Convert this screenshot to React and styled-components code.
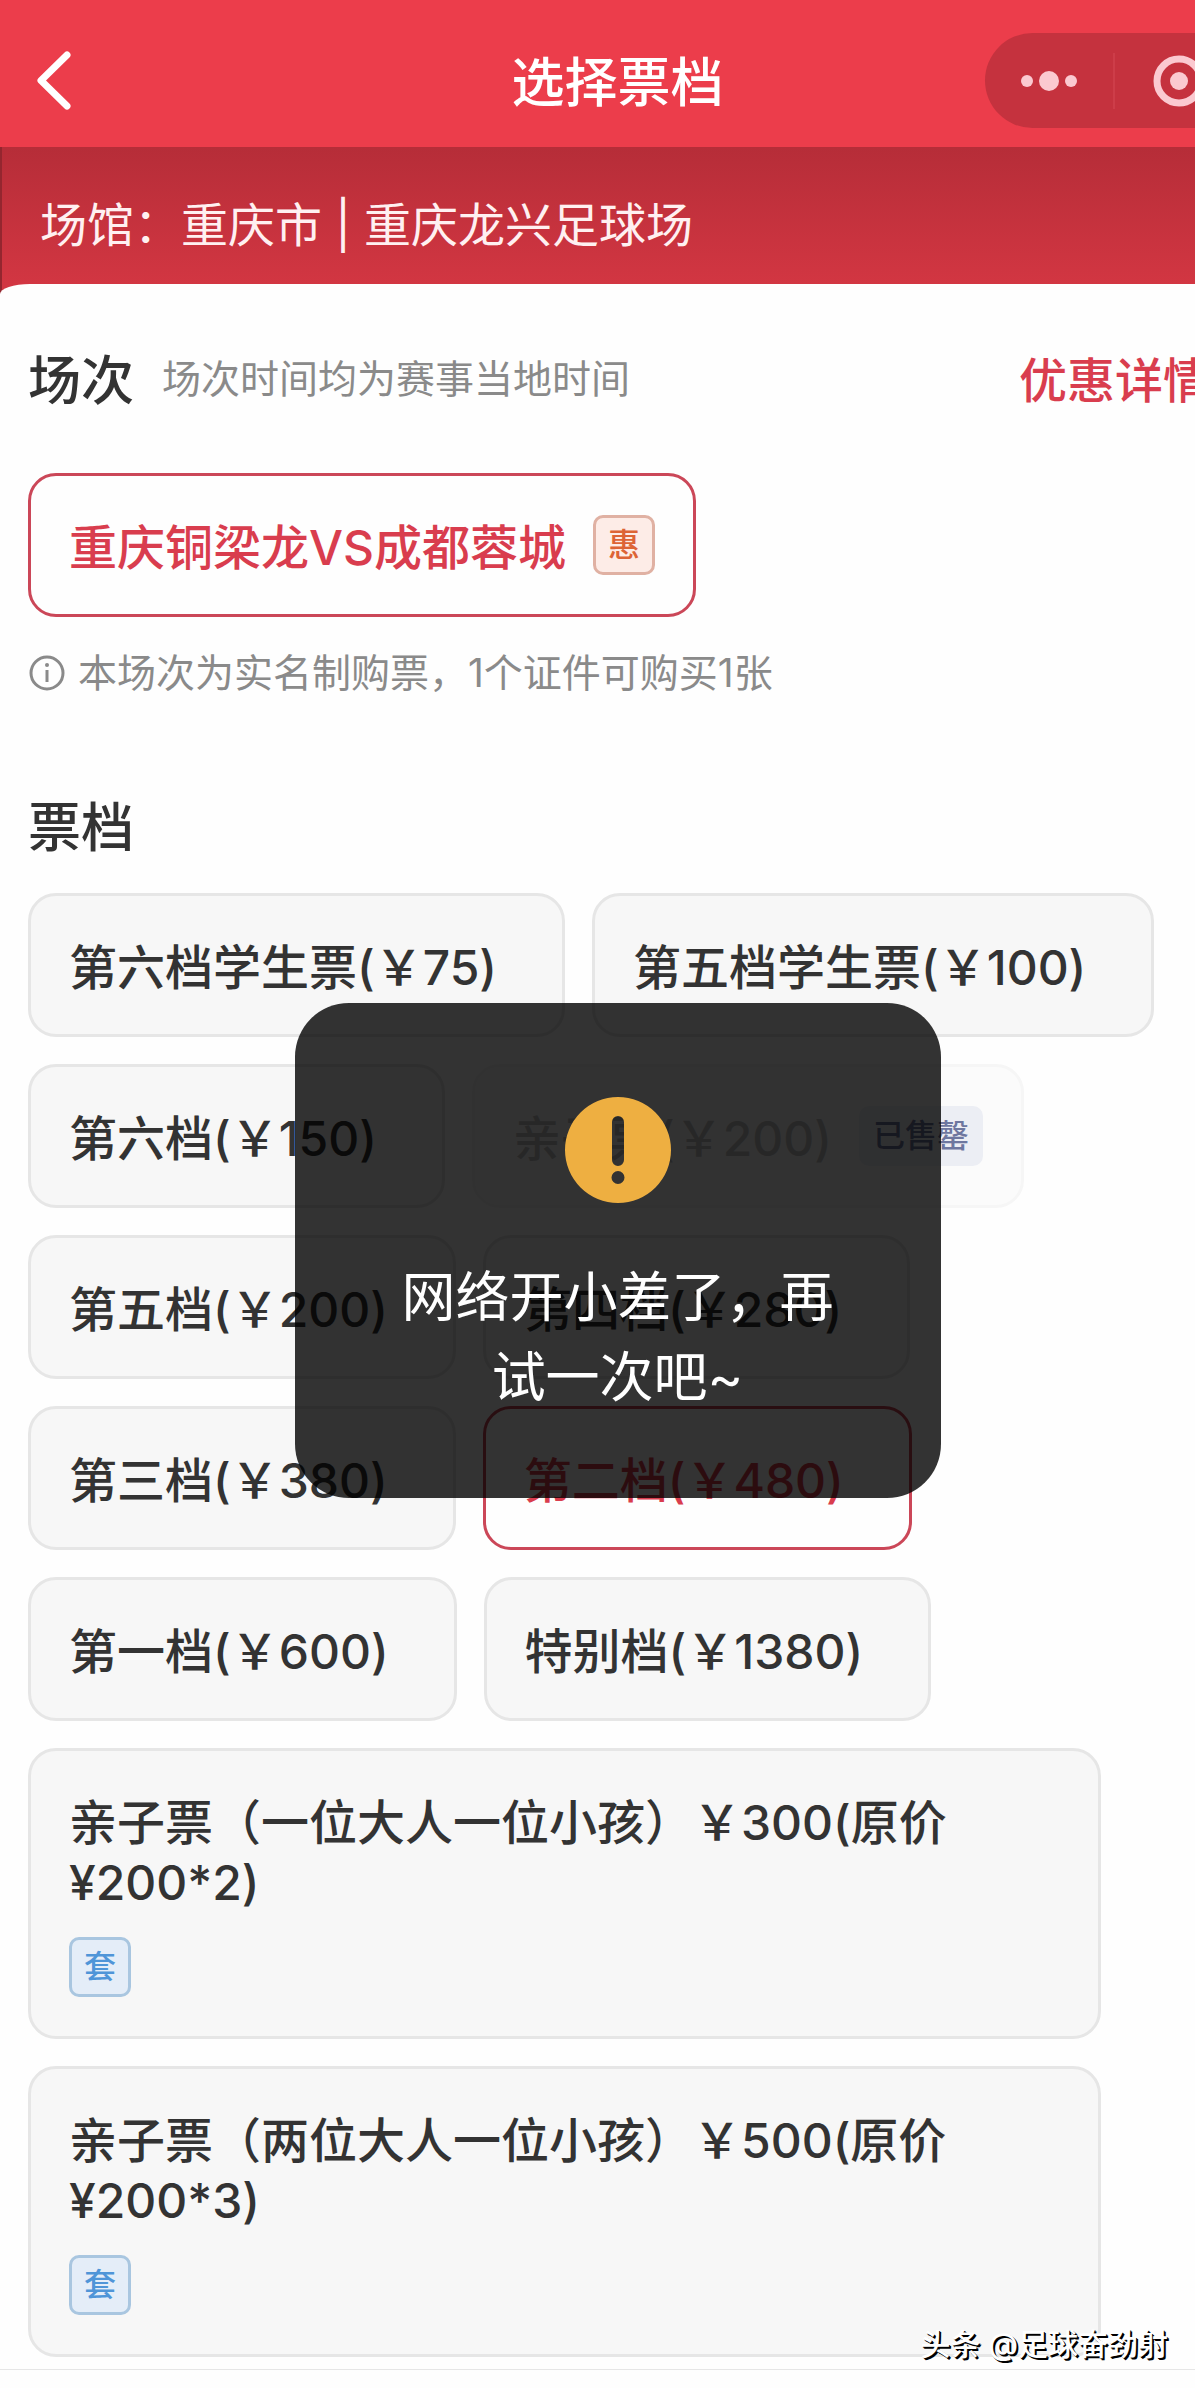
import React, { useState } from "react";
import styled, { createGlobalStyle, css } from "styled-components";

const GlobalStyle = createGlobalStyle`
  *, *::before, *::after { box-sizing: border-box; }
  body {
    margin: 0;
    background: #fefefe;
    color: #333;
    font-family: Inter, "Noto Sans CJK SC", sans-serif;
    font-feature-settings: "calt" 0;
  }
  h1, h2, p { margin: 0; }
  button { font: inherit; color: inherit; font-feature-settings: inherit; }
`;

const Viewport = styled.div`
  position: relative;
  overflow: hidden;
  min-height: 100vh;
`;

/* The screen is laid out slightly wider than the window and runs off its right edge. */
const Screen = styled.div`
  position: relative;
  display: flex;
  flex-direction: column;
  width: calc(100% + 40px);
  min-height: 100vh;
`;

const NavBar = styled.header`
  display: grid;
  grid-template-columns: 1fr auto 1fr;
  align-items: center;
  height: 147px;
  padding-top: 14px;
  background: #ec3d4b;
  color: #fff;
`;

const BackButton = styled.button`
  justify-self: start;
  display: flex;
  margin: 0;
  padding: 0 28px;
  border: 0;
  background: none;
  color: #fff;
`;

const Title = styled.h1`
  padding-top: 4px;
  font-size: 53px;
  line-height: 68px;
  font-weight: 500;
`;

const Capsule = styled.div`
  justify-self: end;
  display: flex;
  align-items: center;
  width: 258px;
  height: 95px;
  margin-right: -8px;
  border-radius: 48px;
  background: #c5323e;
`;

const CapsuleButton = styled.button`
  flex: 1;
  display: flex;
  align-items: center;
  justify-content: center;
  padding: 0;
  border: 0;
  background: none;
  color: #fbc9d0;

  & + & {
    border-left: 2px solid #cd3d49;
  }
`;

const VenueBar = styled.p`
  height: 167px;
  margin-bottom: -30px;
  padding: 46px 40px 0;
  background: linear-gradient(#b62d38, #d23642 137px);
  box-shadow: inset 2px 0 0 #94262f;
  color: #fff0f1;
  font-size: 47px;
  line-height: 64px;
`;

const Sheet = styled.main`
  position: relative;
  flex: 1;
  padding: 59px 28px 12px;
  border-top-left-radius: 30px 10px;
  background: #fefefe;
`;

const SectionHead = styled.div`
  display: flex;
  align-items: center;
  gap: 28px;
  margin-right: -4px;
`;

const SectionTitle = styled.h2`
  padding-top: 4px;
  font-size: 53px;
  line-height: 68px;
  font-weight: 500;
`;

const Hint = styled.span`
  color: #8a8a8a;
  font-size: 39px;
  line-height: 56px;
`;

const DetailLink = styled.a`
  margin-left: auto;
  padding-top: 4px;
  color: #d93d4e;
  font-size: 48px;
  line-height: 60px;
  font-weight: 500;
  text-decoration: none;
`;

const Notice = styled.p`
  display: flex;
  align-items: center;
  gap: 12px;
  margin-top: 28px;
  color: #8a8a8a;
  font-size: 39px;
  line-height: 56px;
`;

const OptionList = styled.div`
  display: flex;
  flex-wrap: wrap;
  gap: 27px;
  margin-top: ${(p) => p.$top}px;
`;

const Option = styled.button`
  display: flex;
  flex-direction: ${(p) => (p.$stacked ? "column" : "row")};
  align-items: ${(p) => (p.$stacked ? "flex-start" : "center")};
  gap: ${(p) => (p.$stacked ? 27 : 0)}px;
  max-width: 91%;
  margin: 0;
  padding: 39px 38px;
  border: 3px solid #e6e6e6;
  border-radius: 28px;
  background: #f7f7f7;
  font-size: 48px;
  line-height: 60px;
  font-weight: 500;
  text-align: left;

  ${(p) =>
    p.$selected &&
    css`
      border-color: #cb4758;
      background: #fefefe;
      color: #d93d4e;
    `}

  &:disabled {
    border-color: #f6f6f6;
    background: #fbfbfb;
    color: #c4c4c4;
  }
`;

/* The label sits a touch below the middle so that digits and Chinese text look centred. */
const OptionLabel = styled.span`
  margin: 3px 27px -3px 0;
`;

const tones = {
  orange: css`
    border-color: #e0b1a3;
    background: #fdece7;
    color: #dd6436;
  `,
  blue: css`
    border-color: #a9c6e0;
    background: #e4edf8;
    color: #4f95d8;
  `,
  gray: css`
    border-color: #eceef4;
    background: #eceef4;
    color: #6e779f;
  `,
};

const Tag = styled.span`
  padding: 0 ${(p) => (p.$tone === "gray" ? 11 : 12)}px;
  border: 3px solid;
  border-radius: 10px;
  font-size: 32px;
  line-height: 54px;
  font-weight: 500;
  ${(p) => tones[p.$tone]}
`;

const BottomBar = styled.footer`
  height: 19px;
  border-top: 1px solid #e6e6e6;
  background: #fefefe;
`;

const Toast = styled.div`
  position: absolute;
  top: 1003px;
  left: 50%;
  transform: translateX(-50%);
  display: flex;
  flex-direction: column;
  align-items: center;
  gap: 55px;
  width: 646px;
  padding: 94px 100px 80px;
  border-radius: 54px;
  background: rgba(0, 0, 0, 0.8);
  color: #fff;
  font-size: 54px;
  line-height: 80px;
  text-align: center;
`;

const Watermark = styled.span`
  position: absolute;
  right: 27px;
  bottom: 22px;
  color: #fff;
  font-size: 30px;
  line-height: 44px;
  font-weight: 500;
  text-shadow: 1px 1px 0 #000, 2px 2px 0 #000;
`;

const BackIcon = () => (
  <svg width="54" height="66" viewBox="0 0 54 66" fill="none" aria-hidden="true">
    <path
      d="M39 7 L13 32.5 L39 58"
      stroke="currentColor"
      strokeWidth="7"
      strokeLinecap="round"
      strokeLinejoin="round"
    />
  </svg>
);

const MoreIcon = () => (
  <svg width="60" height="24" viewBox="0 0 60 24" fill="currentColor" aria-hidden="true">
    <circle cx="8" cy="12" r="6" />
    <circle cx="30" cy="12" r="10" />
    <circle cx="52" cy="12" r="6" />
  </svg>
);

const CloseIcon = () => (
  <svg width="56" height="56" viewBox="0 0 56 56" aria-hidden="true">
    <circle cx="28" cy="28" r="22" fill="none" stroke="currentColor" strokeWidth="7" />
    <circle cx="28" cy="28" r="9" fill="currentColor" />
  </svg>
);

const InfoIcon = () => (
  <svg width="38" height="38" viewBox="0 0 38 38" fill="none" aria-hidden="true">
    <circle cx="19" cy="19" r="16" stroke="currentColor" strokeWidth="3" />
    <circle cx="19" cy="11" r="2" fill="currentColor" />
    <path d="M19 16 V28" stroke="currentColor" strokeWidth="3" />
  </svg>
);

const WarningIcon = () => (
  <svg width="106" height="106" viewBox="0 0 106 106" aria-hidden="true">
    <path
      fill="#eeaf41"
      fillRule="evenodd"
      d="M53 0 a53 53 0 1 0 0 106 a53 53 0 1 0 0 -106 Z
         M47 25 a6 6 0 0 1 12 0 V63 a6 6 0 0 1 -12 0 Z
         M53 74 a6 6 0 1 1 0 13 a6 6 0 1 1 0 -13 Z"
    />
  </svg>
);

const tickets = [
  { label: "第六档学生票(￥75)" },
  { label: "第五档学生票(￥100)" },
  { label: "第六档(￥150)" },
  { label: "亲子票(￥200)", soldOut: true },
  { label: "第五档(￥200)" },
  { label: "第四档(￥280)" },
  { label: "第三档(￥380)" },
  { label: "第二档(￥480)" },
  { label: "第一档(￥600)" },
  { label: "特别档(￥1380)" },
  { label: "亲子票（一位大人一位小孩）￥300(原价¥200*2)", bundle: true },
  { label: "亲子票（两位大人一位小孩）￥500(原价¥200*3)", bundle: true },
];

export default function App() {
  const [selected, setSelected] = useState("第二档(￥480)");

  return (
    <Viewport>
      <GlobalStyle />
      <Screen>
        <NavBar>
          <BackButton type="button" aria-label="返回">
            <BackIcon />
          </BackButton>
          <Title>选择票档</Title>
          <Capsule>
            <CapsuleButton type="button" aria-label="更多">
              <MoreIcon />
            </CapsuleButton>
            <CapsuleButton type="button" aria-label="关闭">
              <CloseIcon />
            </CapsuleButton>
          </Capsule>
        </NavBar>

        <VenueBar>场馆：重庆市 | 重庆龙兴足球场</VenueBar>

        <Sheet>
          <SectionHead>
            <SectionTitle>场次</SectionTitle>
            <Hint>场次时间均为赛事当地时间</Hint>
            <DetailLink href="#discount">优惠详情</DetailLink>
          </SectionHead>

          <OptionList $top={58}>
            <Option type="button" $selected aria-pressed="true">
              <OptionLabel>重庆铜梁龙VS成都蓉城</OptionLabel>
              <Tag $tone="orange">惠</Tag>
            </Option>
          </OptionList>

          <Notice>
            <InfoIcon />
            本场次为实名制购票，1个证件可购买1张
          </Notice>

          <TicketSection selected={selected} onSelect={setSelected} />
        </Sheet>

        <BottomBar />

        <Toast role="alert">
          <WarningIcon />
          <p>网络开小差了，再试一次吧~</p>
        </Toast>
      </Screen>
      <Watermark>头条 @足球奋劲射</Watermark>
    </Viewport>
  );
}

const TicketBlock = styled.section`
  margin-top: 89px;
`;

function TicketSection({ selected, onSelect }) {
  return (
    <TicketBlock>
      <SectionTitle>票档</SectionTitle>
      <OptionList $top={31}>
        {tickets.map(({ label, soldOut, bundle }) => (
          <Option
            key={label}
            type="button"
            disabled={soldOut}
            $stacked={bundle}
            $selected={label === selected}
            aria-pressed={label === selected}
            onClick={() => onSelect(label)}
          >
            <OptionLabel>{label}</OptionLabel>
            {soldOut && <Tag $tone="gray">已售罄</Tag>}
            {bundle && <Tag $tone="blue">套</Tag>}
          </Option>
        ))}
      </OptionList>
    </TicketBlock>
  );
}
